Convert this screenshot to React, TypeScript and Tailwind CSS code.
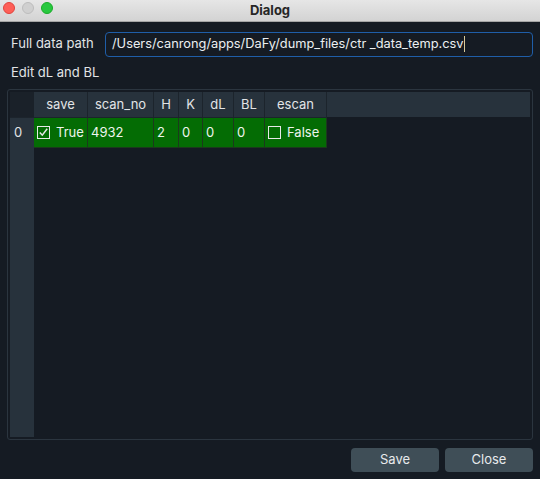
import React from "react";

const cols = [
  { name: "save", w: "w-[54px]" },
  { name: "scan_no", w: "w-[66px]" },
  { name: "H", w: "w-[25px]" },
  { name: "K", w: "w-[24px]" },
  { name: "dL", w: "w-[31px]" },
  { name: "BL", w: "w-[31px]" },
  { name: "escan", w: "w-[62px]" },
];

function Check({ on }: { on: boolean }) {
  return (
    <span className="inline-flex w-[13px] h-[13px] border border-[#e8e8e8] items-center justify-center mr-[6px]">
      {on && (
        <svg width="11" height="11" viewBox="0 0 11 11">
          <path d="M1.8 5.5 L4.3 8.2 L9.2 1.8" stroke="#e8e8e8" strokeWidth="1.5" fill="none" />
        </svg>
      )}
    </span>
  );
}

export default function App() {
  const row = [
    <span className="flex items-center">
      <Check on={true} />
      True
    </span>,
    "4932",
    "2",
    "0",
    "0",
    "0",
    <span className="flex items-center">
      <Check on={false} />
      False
    </span>,
  ];

  return (
    <div
      className="w-[540px] h-[479px] bg-[#151b23] text-[#e2e4e6] text-[13px] flex flex-col overflow-hidden"
      style={{ fontFamily: "Inter, 'Liberation Sans', sans-serif" }}
    >
      {/* title bar */}
      <div className="h-[22px] shrink-0 bg-gradient-to-b from-[#e6e6e6] to-[#d3d3d3] border-b border-[#a5a5a5] relative flex items-center justify-center">
        <div className="absolute left-[3px] top-[2px] flex gap-[7px]">
          <span className="w-[12px] h-[12px] rounded-full bg-[#fe5f57] border border-[#e0443e]" />
          <span className="w-[12px] h-[12px] rounded-full bg-[#d0d0d0] border border-[#bdbdbd]" />
          <span className="w-[12px] h-[12px] rounded-full bg-[#28c83f] border border-[#1aab29]" />
        </div>
        <span className="text-[13px] font-bold text-[#262626]">Dialog</span>
      </div>

      <div className="flex-1 flex flex-col px-[7px] pt-[9px] pb-[7px]">
        <div className="flex items-center h-[26px] pl-[4px]">
          <span className="w-[94px]">Full data path</span>
          <div className="flex-1 h-[25px] border border-[#1f5ea8] rounded-[4px] flex items-center px-[6px] text-[12.8px] text-[#eceff1]">
            /Users/canrong/apps/DaFy/dump_files/ctr _data_temp.csv
            <span className="w-px h-[16px] bg-[#d8c99a] ml-px" />
          </div>
        </div>
        <div className="h-[32px] flex items-center pl-[4px]">Edit dL and BL</div>

        <div className="flex-1 border border-[#2b353f] rounded-[3px] p-[2px] flex flex-col">
          <div className="flex h-[25px] bg-[#27323c]">
            <div className="w-[24px] bg-[#1a2129]" />
            {cols.map((c) => (
              <div
                key={c.name}
                className={`${c.w} border-r border-[#1c242c] flex items-center justify-center`}
              >
                {c.name}
              </div>
            ))}
          </div>
          <div className="flex flex-1">
            <div className="w-[24px] bg-[#27323c] border-t border-[#1c242c]">
              <div className="h-[30px] flex items-center pl-[4px]">0</div>
            </div>
            <div className="flex items-start border-t border-[#1c242c]">
              {cols.map((c, i) => (
                <div
                  key={c.name}
                  className={`${c.w} h-[30px] bg-[#046c04] border-r border-b border-[#1b3a1c] flex items-center px-[3px] text-[#eef5ee]`}
                >
                  {row[i]}
                </div>
              ))}
            </div>
          </div>
        </div>

        <div className="flex justify-end gap-[6px] pt-[8px]">
          <button className="w-[88px] h-[24px] rounded-[4px] bg-[#3f4e57] text-[#e8eaec] text-[13px]">
            Save
          </button>
          <button className="w-[88px] h-[24px] rounded-[4px] bg-[#3f4e57] text-[#e8eaec] text-[13px]">
            Close
          </button>
        </div>
      </div>
    </div>
  );
}
